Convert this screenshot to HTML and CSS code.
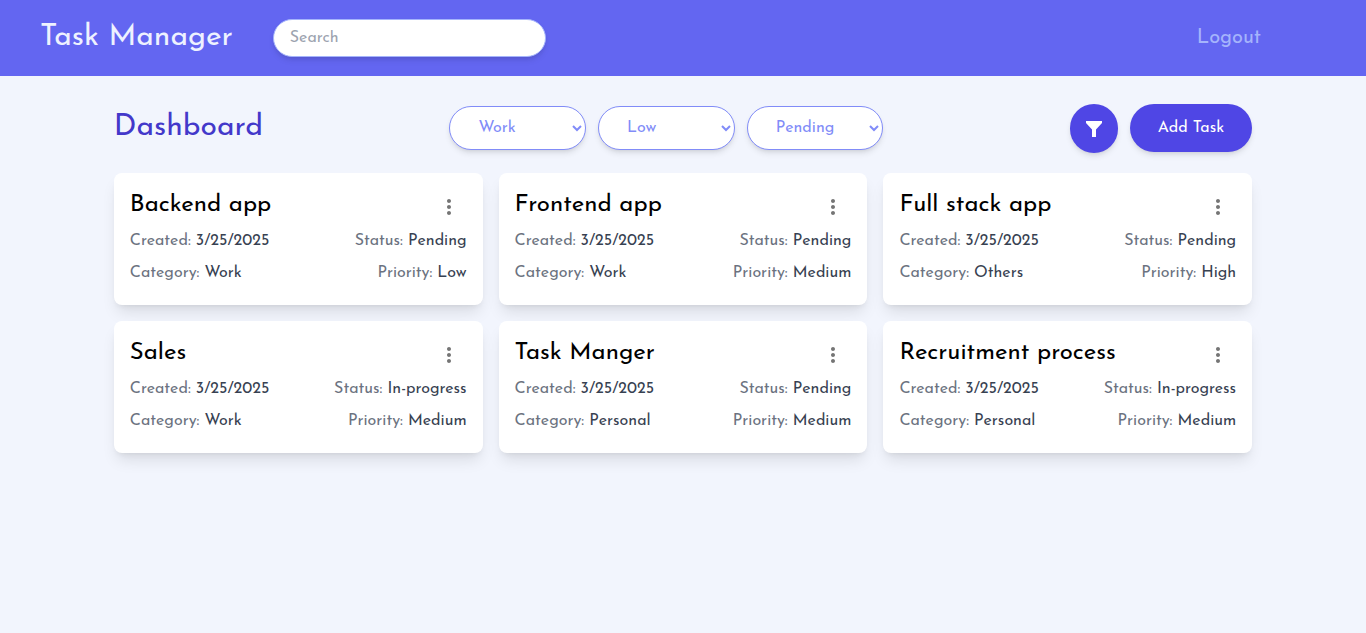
FILE: index.html
```html
<!DOCTYPE html>
<html lang="en">
<head>
<meta charset="utf-8">
<meta name="viewport" content="width=device-width, initial-scale=1">
<title>Task Manager</title>
<link rel="stylesheet" href="styles.css">
</head>
<body>
<svg class="sprite" aria-hidden="true">
  <symbol id="dots" viewBox="0 0 24 24"><path d="M12 8c1.100 0 2-.9 2-2s-.9-2-2-2-2 .9-2 2 .9 2 2 2zm0 2c-1.100 0-2 .9-2 2s.9 2 2 2 2-.9 2-2-.9-2-2-2zm0 6c-1.100 0-2 .9-2 2s.9 2 2 2 2-.9 2-2-.9-2-2-2z"/></symbol>
</svg>
<header class="topbar">
  <h1 class="brand">Task Manager</h1>
  <input class="search" type="search" placeholder="Search" aria-label="Search">
  <button class="logout" type="button">Logout</button>
</header>
<main class="page">
  <div class="toolbar">
    <h2 class="heading">Dashboard</h2>
    <div class="filters">
      <select class="filter" aria-label="Category"><option>Work</option><option>Personal</option><option>Others</option></select>
      <select class="filter" aria-label="Priority"><option>Low</option><option>Medium</option><option>High</option></select>
      <select class="filter" aria-label="Status"><option>Pending</option><option>In-progress</option></select>
    </div>
    <div class="actions">
      <button class="round" type="button" aria-label="Filter">
        <svg class="funnel" viewBox="0 0 16 16"><path d="M0 0h16v2l-6 6.500V16H6V8.500L0 2z"/></svg>
      </button>
      <button class="add" type="button">Add Task</button>
    </div>
  </div>
  <section class="cards" aria-label="Tasks">
    <article class="card">
      <div class="card-head"><h3 class="title">Backend app</h3><button class="menu" type="button" aria-label="Task menu"><svg class="dots"><use href="#dots"/></svg></button></div>
      <div class="row"><p class="label">Created: <span class="value">3/25/2025</span></p><p class="label">Status: <span class="value">Pending</span></p></div>
      <div class="row"><p class="label">Category: <span class="value">Work</span></p><p class="label">Priority: <span class="value">Low</span></p></div>
    </article>
    <article class="card">
      <div class="card-head"><h3 class="title">Frontend app</h3><button class="menu" type="button" aria-label="Task menu"><svg class="dots"><use href="#dots"/></svg></button></div>
      <div class="row"><p class="label">Created: <span class="value">3/25/2025</span></p><p class="label">Status: <span class="value">Pending</span></p></div>
      <div class="row"><p class="label">Category: <span class="value">Work</span></p><p class="label">Priority: <span class="value">Medium</span></p></div>
    </article>
    <article class="card">
      <div class="card-head"><h3 class="title">Full stack app</h3><button class="menu" type="button" aria-label="Task menu"><svg class="dots"><use href="#dots"/></svg></button></div>
      <div class="row"><p class="label">Created: <span class="value">3/25/2025</span></p><p class="label">Status: <span class="value">Pending</span></p></div>
      <div class="row"><p class="label">Category: <span class="value">Others</span></p><p class="label">Priority: <span class="value">High</span></p></div>
    </article>
    <article class="card">
      <div class="card-head"><h3 class="title">Sales</h3><button class="menu" type="button" aria-label="Task menu"><svg class="dots"><use href="#dots"/></svg></button></div>
      <div class="row"><p class="label">Created: <span class="value">3/25/2025</span></p><p class="label">Status: <span class="value">In-progress</span></p></div>
      <div class="row"><p class="label">Category: <span class="value">Work</span></p><p class="label">Priority: <span class="value">Medium</span></p></div>
    </article>
    <article class="card">
      <div class="card-head"><h3 class="title">Task Manger</h3><button class="menu" type="button" aria-label="Task menu"><svg class="dots"><use href="#dots"/></svg></button></div>
      <div class="row"><p class="label">Created: <span class="value">3/25/2025</span></p><p class="label">Status: <span class="value">Pending</span></p></div>
      <div class="row"><p class="label">Category: <span class="value">Personal</span></p><p class="label">Priority: <span class="value">Medium</span></p></div>
    </article>
    <article class="card">
      <div class="card-head"><h3 class="title">Recruitment process</h3><button class="menu" type="button" aria-label="Task menu"><svg class="dots"><use href="#dots"/></svg></button></div>
      <div class="row"><p class="label">Created: <span class="value">3/25/2025</span></p><p class="label">Status: <span class="value">In-progress</span></p></div>
      <div class="row"><p class="label">Category: <span class="value">Personal</span></p><p class="label">Priority: <span class="value">Medium</span></p></div>
    </article>
  </section>
</main>
</body>
</html>
```

FILE: styles.css
```css
* {
  box-sizing: border-box;
  margin: 0;
}

body {
  min-height: 100vh;
  background: #f2f5fd;
  font-family: "Josefin Sans", Lato, sans-serif;
  font-size: 16px;
  line-height: 24px;
  color: #000;
}

h1, h2, h3 {
  font-weight: 400;
}

button, input, select {
  font: inherit;
}

button {
  border: 0;
  padding: 0;
  background: none;
  cursor: pointer;
}

.sprite {
  display: none;
}

.topbar {
  display: flex;
  align-items: center;
  height: 76px;
  padding: 0 105px 0 40px;
  background: #6366f1;
}

.brand {
  margin-right: 40px;
  font-size: 30px;
  line-height: 36px;
  color: #eef2ff;
}

.search {
  width: 20vw;
  height: 38px;
  padding: 0 16px;
  border: 1px solid #a5b4fc;
  border-radius: 19px;
  background: #fff;
  box-shadow: 0 4px 6px -1px rgba(0, 0, 0, .1), 0 2px 4px -2px rgba(0, 0, 0, .1);
}

.search::placeholder {
  color: #9ca3af;
}

.logout {
  margin-left: auto;
  font-size: 20px;
  line-height: 28px;
  color: #a5b4fc;
}

.page {
  width: 83.333%;
  margin: 0 auto;
  padding-top: 28px;
}

.toolbar {
  display: flex;
  align-items: center;
  justify-content: space-between;
  height: 48px;
  margin-bottom: 21px;
}

.heading {
  font-size: 30px;
  line-height: 36px;
  color: #4338ca;
}

.filters, .actions {
  display: flex;
  gap: 12px;
}

.actions {
  align-self: flex-start;
}

.filter {
  width: 10vw;
  height: 44px;
  padding: 0 0 0 24px;
  border: 1px solid #818cf8;
  border-radius: 22px;
  background: #fff;
  color: #818cf8;
  box-shadow: 0 4px 6px -1px rgba(0, 0, 0, .1), 0 2px 4px -2px rgba(0, 0, 0, .1);
}

.round, .add {
  border-radius: 25px;
  background: #4f46e5;
  color: #fff;
  box-shadow: 0 4px 6px -1px rgba(0, 0, 0, .1), 0 2px 4px -2px rgba(0, 0, 0, .1);
}

.round {
  display: grid;
  place-items: center;
  width: 48px;
  height: 49px;
}

.funnel {
  width: 16px;
  height: 16px;
  fill: #fff;
}

.add {
  height: 48px;
  padding: 0 28px;
}

.cards {
  display: grid;
  grid-template-columns: repeat(3, 1fr);
  gap: 16px;
}

.card {
  padding: 16px 16px 20px;
  border-radius: 8px;
  background: #fff;
  box-shadow: 0 10px 15px -3px rgba(0, 0, 0, .1), 0 4px 6px -4px rgba(0, 0, 0, .1);
}

.card-head {
  display: flex;
  justify-content: space-between;
  height: 40px;
}

.title {
  font-size: 24px;
  line-height: 32px;
}

.menu {
  width: 36px;
  height: 36px;
}

.dots {
  display: block;
  width: 24px;
  height: 24px;
  margin: 0 auto;
  fill: #757575;
}

.row {
  display: flex;
  justify-content: space-between;
}

.row + .row {
  margin-top: 8px;
}

.label {
  color: #6b7280;
}

.value {
  color: #374151;
}
```
